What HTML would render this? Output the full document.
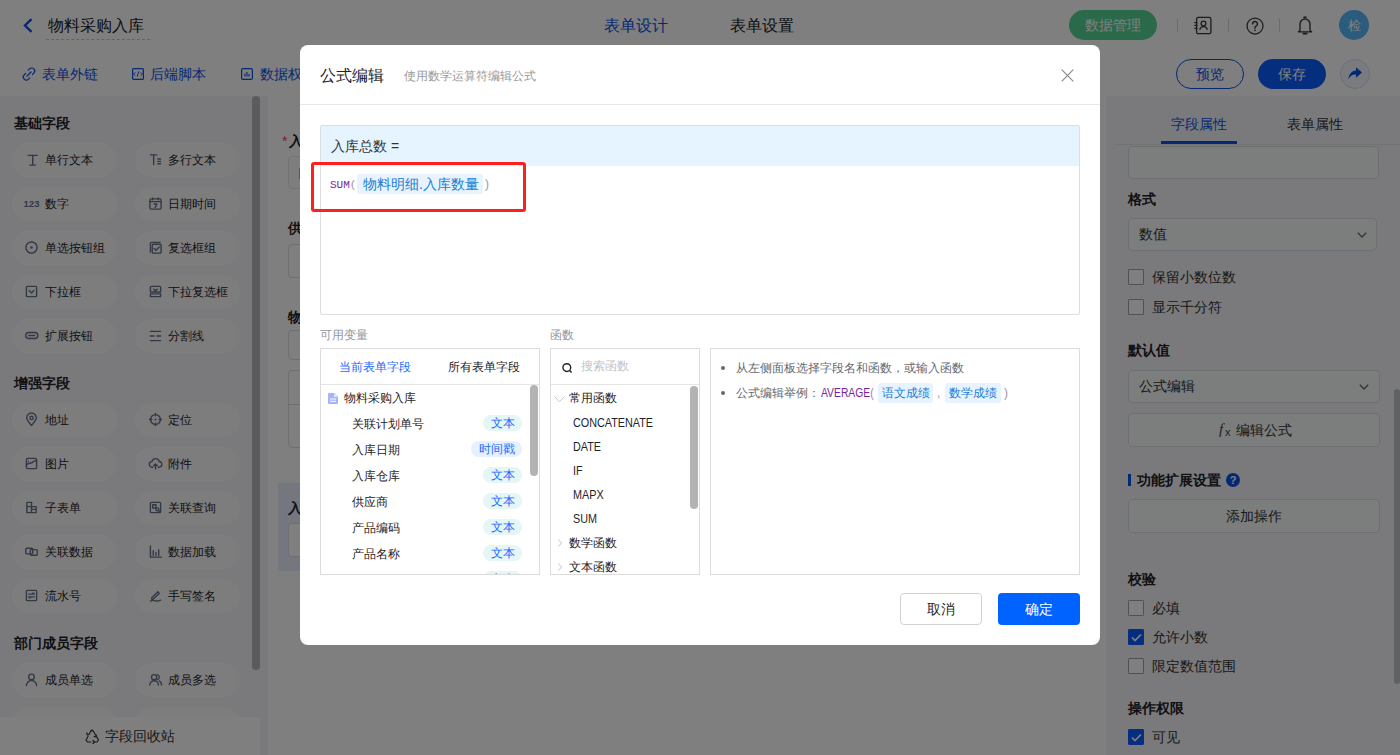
<!DOCTYPE html>
<html><head><meta charset="utf-8">
<style>
*{box-sizing:border-box;margin:0;padding:0}
html,body{width:1400px;height:755px;overflow:hidden;background:#fff;font-family:"Liberation Sans",sans-serif;color:#333}
.a{position:absolute}
.t{position:absolute;white-space:nowrap}
svg{position:absolute;overflow:visible}
/* header */
#hdr{left:0;top:0;width:1400px;height:51px;border-bottom:1px solid #e6e6e6;background:#fff}
#tb{left:0;top:50px;width:1400px;height:46px;background:#fff}
/* left panel */
#lp{left:0;top:96px;width:268px;height:659px;background:#f4f5f8}
.hd{font-size:14px;font-weight:bold;color:#1f2329;line-height:20px}
.pill{position:absolute;width:105px;height:34px;border-radius:17px;background:#fbfbfd}
.pill .t{left:33px;top:0;line-height:34px;font-size:12px;color:#1f2329}
.pill svg{left:13px;top:10px}
/* right panel */
#rp{left:1106px;top:96px;width:294px;height:659px;background:#f4f5f8}
.rl{font-size:14px;color:#333;line-height:20px}
.box{position:absolute;border:1px solid #dcdfe6;border-radius:4px;background:#f9fafb}
.cb{position:absolute;width:16px;height:16px;border:1px solid #9fa3a9;border-radius:1px;background:#fff}
.cbon{background:#0a5cff;border-color:#0a5cff}
.tag{position:absolute;height:16px;border-radius:8px;font-size:12px;line-height:16px;color:#1a6cff;text-align:center}
.fn{font-size:12px;line-height:20px;color:#1f2329;transform-origin:0 50%;transform:scaleX(.9)}
#mask{left:0;top:0;width:1400px;height:755px;background:rgba(0,0,0,.5)}
#modal{left:300px;top:45px;width:800px;height:600px;background:#fff;border-radius:8px}
</style></head><body>

<!-- ===== HEADER ===== -->
<div id="hdr" class="a">
  <svg style="left:23px;top:18px" width="10" height="15" viewBox="0 0 10 15"><path d="M8.5 1.2 L2 7.5 L8.5 13.8" fill="none" stroke="#0a50e6" stroke-width="2.4"/></svg>
  <div class="t" style="left:48px;top:15px;font-size:16px;line-height:22px;color:#222">物料采购入库</div>
  <div class="a" style="left:46px;top:39px;width:104px;border-top:1px dashed #c8c8c8"></div>
  <div class="t" style="left:604px;top:15px;font-size:16px;line-height:22px;color:#0a50e6">表单设计</div>
  <div class="t" style="left:730px;top:15px;font-size:16px;line-height:22px;color:#222">表单设置</div>
  <div class="a" style="left:1069px;top:10px;width:88px;height:30px;border-radius:15px;background:#55d494"></div>
  <div class="t" style="left:1069px;top:10px;width:88px;text-align:center;line-height:30px;font-size:14px;color:#fff">数据管理</div>
  <div class="a" style="left:1177px;top:18px;width:1px;height:14px;background:#d9d9d9"></div>
  <div class="a" style="left:1228px;top:18px;width:1px;height:14px;background:#d9d9d9"></div>
  <div class="a" style="left:1279px;top:18px;width:1px;height:14px;background:#d9d9d9"></div>

  <svg style="left:1193px;top:16px" width="19" height="19" viewBox="0 0 19 19"><rect x="3.6" y="1.4" width="14.3" height="16.3" rx="1.5" fill="none" stroke="#383838" stroke-width="1.3"/><path d="M1.3 6.6h3.2M1.3 9.4h3.2M1.3 12.3h3.2" stroke="#383838" stroke-width="1.3"/><circle cx="10.5" cy="7.5" r="2.4" fill="none" stroke="#383838" stroke-width="1.25"/><path d="M6.8 13.8a3.8 3.8 0 0 1 7.5 0" fill="none" stroke="#383838" stroke-width="1.25"/></svg>
  <svg style="left:1246px;top:17px" width="18" height="18" viewBox="0 0 18 18"><circle cx="9" cy="9" r="8" fill="none" stroke="#3a3a3a" stroke-width="1.25"/><path d="M6.6 6.9a2.4 2.4 0 1 1 3.4 2.2c-.7.3-1 .8-1 1.5v.6" fill="none" stroke="#3a3a3a" stroke-width="1.4" stroke-linecap="round"/><circle cx="9" cy="13.3" r=".9" fill="#3a3a3a"/></svg>
  <svg style="left:1297px;top:16px" width="16" height="19" viewBox="0 0 16 19"><path d="M7 1.3h2" stroke="#333" stroke-width="1.6" stroke-linecap="round"/><path d="M3 14.6V8a5 5 0 0 1 10 0v6.6l1.6 1.2H1.4z" fill="none" stroke="#383838" stroke-width="1.35" stroke-linejoin="round"/><path d="M6.3 17.6h3.4" stroke="#333" stroke-width="1.6" stroke-linecap="round"/></svg>
  <div class="a" style="left:1339px;top:10px;width:30px;height:30px;border-radius:15px;background:#56b8fa"></div>
  <div class="t" style="left:1339px;top:11px;width:30px;text-align:center;line-height:30px;font-size:13px;color:#fff">检</div>
</div>

<!-- ===== TOOLBAR ===== -->
<div id="tb" class="a">
  
  <svg style="left:22px;top:17px" width="14" height="14" viewBox="0 0 14 14"><path d="M6.2 3.2l1.3-1.3a3 3 0 0 1 4.3 4.3l-1.3 1.3M7.8 10.8l-1.3 1.3a3 3 0 0 1-4.3-4.3l1.3-1.3M5 9l4-4" fill="none" stroke="#0a50e6" stroke-width="1.2" stroke-linecap="round"/></svg>
  <svg style="left:132px;top:18px" width="12" height="12" viewBox="0 0 12 12"><rect x="0.6" y="0.6" width="10.8" height="10.8" rx="1" fill="none" stroke="#0a50e6" stroke-width="1.2"/><path d="M3.3 4.3L1.6 6l1.7 1.7M8.7 4.3L10.4 6 8.7 7.7M6.8 3.5L5.2 8.5" fill="none" stroke="#0a50e6" stroke-width="1"/></svg>
  <svg style="left:241px;top:18px" width="12" height="12" viewBox="0 0 12 12"><rect x="0.6" y="0.6" width="10.8" height="10.8" rx="1.5" fill="none" stroke="#0a50e6" stroke-width="1.2"/><path d="M4 5.5v3M6 4v4.5M8 6v2.5" stroke="#0a50e6" stroke-width="1.1"/></svg>
  <div class="t" style="left:42px;top:14px;font-size:14px;line-height:20px;color:#0a50e6">表单外链</div>
  <div class="t" style="left:150px;top:14px;font-size:14px;line-height:20px;color:#0a50e6">后端脚本</div>
  <div class="t" style="left:260px;top:14px;font-size:14px;line-height:20px;color:#0a50e6">数据权限</div>
  <div class="a" style="left:1176px;top:9px;width:68px;height:30px;border:1px solid #0a50e6;border-radius:15px"></div>
  <div class="t" style="left:1176px;top:9px;width:68px;text-align:center;line-height:30px;font-size:14px;color:#0a50e6">预览</div>
  <div class="a" style="left:1258px;top:9px;width:68px;height:30px;background:#0a5cff;border-radius:15px"></div>
  <div class="t" style="left:1258px;top:9px;width:68px;text-align:center;line-height:30px;font-size:14px;color:#fff">保存</div>
  <div class="a" style="left:1340px;top:9px;width:30px;height:30px;border:1px solid #d6e0f5;border-radius:15px;background:#f2f6ff"></div>
  <svg style="left:1348px;top:17px" width="14" height="13" viewBox="0 0 14 13"><path d="M8 0.3L14 5.5 8 10.8V7.6C4.5 7.4 2 8.8 0.3 12.5 0.7 7.4 3.5 3.9 8 3.5z" fill="#0a50e6"/></svg>

</div>

<!-- ===== LEFT PANEL ===== -->
<div id="lp" class="a">
<div class="t hd" style="left:14px;top:17px">基础字段</div>
<div class="pill" style="left:12px;top:47px"><svg style="left:13px;top:10px" width="13" height="13" viewBox="0 0 14 14"><path d="M3.3 2.5h10M8.3 2.5v10.5M5.3 13h6" fill="none" stroke="#67718a" stroke-width="1.5" stroke-linecap="round" stroke-linejoin="round"/></svg><div class="t">单行文本</div></div>
<div class="pill" style="left:135px;top:47px"><svg style="left:14px;top:10px" width="13" height="13" viewBox="0 0 14 14"><path d="M1.5 2h7M5 2v10.5M9.5 6.5h3M9.5 9h3M9.5 11.5h3" fill="none" stroke="#67718a" stroke-width="1.5" stroke-linecap="round" stroke-linejoin="round"/></svg><div class="t">多行文本</div></div>
<div class="pill" style="left:12px;top:91px"><svg style="left:13px;top:10px" width="13" height="13" viewBox="0 0 14 14"><text x="-1.5" y="10.8" font-family="Liberation Sans" font-weight="bold" font-size="10.2" fill="#67718a" letter-spacing="0">123</text></svg><div class="t">数字</div></div>
<div class="pill" style="left:135px;top:91px"><svg style="left:14px;top:10px" width="13" height="13" viewBox="0 0 14 14"><rect x="1" y="2" width="12" height="11" rx="1.5" fill="none" stroke="#67718a" stroke-width="1.5" stroke-linecap="round" stroke-linejoin="round"/><path d="M1 5h12M4 1v2M10 1v2M5.5 7.5h3l-2 4" fill="none" stroke="#67718a" stroke-width="1.5" stroke-linecap="round" stroke-linejoin="round"/></svg><div class="t">日期时间</div></div>
<div class="pill" style="left:12px;top:135px"><svg style="left:13px;top:10px" width="13" height="13" viewBox="0 0 14 14"><circle cx="7" cy="7" r="6" fill="none" stroke="#67718a" stroke-width="1.5" stroke-linecap="round" stroke-linejoin="round"/><circle cx="7" cy="7" r="1.3" fill="#67718a"/></svg><div class="t">单选按钮组</div></div>
<div class="pill" style="left:135px;top:135px"><svg style="left:14px;top:10px" width="13" height="13" viewBox="0 0 14 14"><path d="M1.5 12V2.5a1 1 0 0 1 1-1H12" fill="none" stroke="#67718a" stroke-width="1.5" stroke-linecap="round" stroke-linejoin="round"/><rect x="3.5" y="3.5" width="9.5" height="9.5" rx="1" fill="none" stroke="#67718a" stroke-width="1.5" stroke-linecap="round" stroke-linejoin="round"/><path d="M5.5 8l2 2 3.5-3.5" fill="none" stroke="#67718a" stroke-width="1.5" stroke-linecap="round" stroke-linejoin="round"/></svg><div class="t">复选框组</div></div>
<div class="pill" style="left:12px;top:179px"><svg style="left:13px;top:10px" width="13" height="13" viewBox="0 0 14 14"><rect x="1.5" y="1.5" width="11" height="11" rx="1" fill="none" stroke="#67718a" stroke-width="1.5" stroke-linecap="round" stroke-linejoin="round"/><path d="M4.5 6l2.5 2.5 2.5-2.5" fill="none" stroke="#67718a" stroke-width="1.5" stroke-linecap="round" stroke-linejoin="round"/></svg><div class="t">下拉框</div></div>
<div class="pill" style="left:135px;top:179px"><svg style="left:14px;top:10px" width="13" height="13" viewBox="0 0 14 14"><path d="M1.5 7.5v-5a1 1 0 0 1 1-1h9a1 1 0 0 1 1 1v5zM1.5 9.5h11v3h-11z M5 4.5l2 1.5 2-1.5" fill="none" stroke="#67718a" stroke-width="1.5" stroke-linecap="round" stroke-linejoin="round"/></svg><div class="t">下拉复选框</div></div>
<div class="pill" style="left:12px;top:223px"><svg style="left:13px;top:10px" width="13" height="13" viewBox="0 0 14 14"><rect x="0.8" y="3.8" width="13" height="6.5" rx="3.25" fill="none" stroke="#67718a" stroke-width="1.5" stroke-linecap="round" stroke-linejoin="round"/><path d="M4 7h6.5" fill="none" stroke="#67718a" stroke-width="1.5" stroke-linecap="round" stroke-linejoin="round"/></svg><div class="t">扩展按钮</div></div>
<div class="pill" style="left:135px;top:223px"><svg style="left:14px;top:10px" width="13" height="13" viewBox="0 0 14 14"><path d="M1.5 2.5h11M1.5 12.5h11M1.5 7.5h4M8.5 7.5h4" fill="none" stroke="#67718a" stroke-width="1.5" stroke-linecap="round" stroke-linejoin="round"/></svg><div class="t">分割线</div></div>
<div class="t hd" style="left:14px;top:277px">增强字段</div>
<div class="pill" style="left:12px;top:307px"><svg style="left:13px;top:10px" width="13" height="13" viewBox="0 0 14 14"><path d="M7 13.5C3.5 9.5 1.8 7.2 1.8 5.2a5.2 5.2 0 0 1 10.4 0c0 2-1.7 4.3-5.2 8.3z" fill="none" stroke="#67718a" stroke-width="1.5" stroke-linecap="round" stroke-linejoin="round"/><circle cx="7" cy="5.3" r="1.8" fill="none" stroke="#67718a" stroke-width="1.5" stroke-linecap="round" stroke-linejoin="round"/></svg><div class="t">地址</div></div>
<div class="pill" style="left:135px;top:307px"><svg style="left:14px;top:10px" width="13" height="13" viewBox="0 0 14 14"><circle cx="7" cy="7" r="5.3" fill="none" stroke="#67718a" stroke-width="1.5" stroke-linecap="round" stroke-linejoin="round"/><path d="M7 0.5v2.5M7 11v2.5M0.5 7h2.5M11 7h2.5" fill="none" stroke="#67718a" stroke-width="1.5" stroke-linecap="round" stroke-linejoin="round"/><circle cx="7" cy="7" r="1" fill="#67718a"/></svg><div class="t">定位</div></div>
<div class="pill" style="left:12px;top:351px"><svg style="left:13px;top:10px" width="13" height="13" viewBox="0 0 14 14"><rect x="1.5" y="1.5" width="11" height="11" rx="1.5" fill="none" stroke="#67718a" stroke-width="1.5" stroke-linecap="round" stroke-linejoin="round"/><path d="M1.5 8.5c2-3 4-1 6-2.5s3-2 5-2.5M3.5 4.5h.1" fill="none" stroke="#67718a" stroke-width="1.5" stroke-linecap="round" stroke-linejoin="round"/></svg><div class="t">图片</div></div>
<div class="pill" style="left:135px;top:351px"><svg style="left:14px;top:10px" width="13" height="13" viewBox="0 0 14 14"><path d="M4 11H3.5a3 3 0 0 1-.3-6A4 4 0 0 1 11 4.8 3 3 0 0 1 10.5 11H10M7 13V7.5M5 9.5l2-2 2 2" fill="none" stroke="#67718a" stroke-width="1.5" stroke-linecap="round" stroke-linejoin="round"/></svg><div class="t">附件</div></div>
<div class="pill" style="left:12px;top:395px"><svg style="left:13px;top:10px" width="13" height="13" viewBox="0 0 14 14"><path d="M2 1.5h5v11H2zM7 6h5v6.5H7M2 6h5M7 9h5" fill="none" stroke="#67718a" stroke-width="1.5" stroke-linecap="round" stroke-linejoin="round"/></svg><div class="t">子表单</div></div>
<div class="pill" style="left:135px;top:395px"><svg style="left:14px;top:10px" width="13" height="13" viewBox="0 0 14 14"><rect x="1.5" y="1.5" width="11" height="11" rx="1" fill="none" stroke="#67718a" stroke-width="1.5" stroke-linecap="round" stroke-linejoin="round"/><rect x="4" y="4" width="3.5" height="3.5" fill="none" stroke="#67718a" stroke-width="1.5" stroke-linecap="round" stroke-linejoin="round"/><circle cx="9" cy="9" r="1.6" fill="none" stroke="#67718a" stroke-width="1.5" stroke-linecap="round" stroke-linejoin="round"/><path d="M10.2 10.2l1.6 1.6" fill="none" stroke="#67718a" stroke-width="1.5" stroke-linecap="round" stroke-linejoin="round"/></svg><div class="t">关联查询</div></div>
<div class="pill" style="left:12px;top:439px"><svg style="left:13px;top:10px" width="13" height="13" viewBox="0 0 14 14"><rect x="0.8" y="3.5" width="7.5" height="6" rx="1" fill="none" stroke="#67718a" stroke-width="1.5" stroke-linecap="round" stroke-linejoin="round"/><rect x="5.7" y="5" width="7.5" height="6" rx="1" fill="none" stroke="#67718a" stroke-width="1.5" stroke-linecap="round" stroke-linejoin="round"/></svg><div class="t">关联数据</div></div>
<div class="pill" style="left:135px;top:439px"><svg style="left:14px;top:10px" width="13" height="13" viewBox="0 0 14 14"><path d="M1.5 1v12h12M4.5 6v5M7.5 8v3M10.5 5v6" fill="none" stroke="#67718a" stroke-width="1.5" stroke-linecap="round" stroke-linejoin="round"/></svg><div class="t">数据加载</div></div>
<div class="pill" style="left:12px;top:483px"><svg style="left:13px;top:10px" width="13" height="13" viewBox="0 0 14 14"><rect x="1.5" y="1.5" width="11" height="11" rx="1" fill="none" stroke="#67718a" stroke-width="1.5" stroke-linecap="round" stroke-linejoin="round"/><path d="M4 5.5h6l-1.5-1.2M10 8.5H4l1.5 1.2" fill="none" stroke="#67718a" stroke-width="1.5" stroke-linecap="round" stroke-linejoin="round"/></svg><div class="t">流水号</div></div>
<div class="pill" style="left:135px;top:483px"><svg style="left:14px;top:10px" width="13" height="13" viewBox="0 0 14 14"><path d="M3 9.5L9.5 3 11 4.5 4.5 11H3zM1.5 13c2.5-1.5 4.5-.5 6 0s3-.5 5-1" fill="none" stroke="#67718a" stroke-width="1.5" stroke-linecap="round" stroke-linejoin="round"/></svg><div class="t">手写签名</div></div>
<div class="t hd" style="left:14px;top:537px">部门成员字段</div>
<div class="pill" style="left:12px;top:567px"><svg style="left:13px;top:10px" width="13" height="13" viewBox="0 0 14 14"><circle cx="7" cy="4.2" r="3" fill="none" stroke="#67718a" stroke-width="1.5" stroke-linecap="round" stroke-linejoin="round"/><path d="M1.5 13.5a5.5 5.5 0 0 1 11 0" fill="none" stroke="#67718a" stroke-width="1.5" stroke-linecap="round" stroke-linejoin="round"/></svg><div class="t">成员单选</div></div>
<div class="pill" style="left:135px;top:567px"><svg style="left:14px;top:10px" width="13" height="13" viewBox="0 0 14 14"><circle cx="5.5" cy="4.5" r="2.8" fill="none" stroke="#67718a" stroke-width="1.5" stroke-linecap="round" stroke-linejoin="round"/><path d="M0.8 13a4.7 4.7 0 0 1 9.4 0M9 1.8a2.8 2.8 0 0 1 0 5.4M11 8.5a4.7 4.7 0 0 1 2.5 4.5" fill="none" stroke="#67718a" stroke-width="1.5" stroke-linecap="round" stroke-linejoin="round"/></svg><div class="t">成员多选</div></div>
<div class="pill" style="left:12px;top:611px"></div>
<div class="pill" style="left:135px;top:611px"></div>
<div class="a" style="left:252px;top:0;width:8px;height:574px;border-radius:4px;background:#b6b6b6"></div>
<div class="a" style="left:0;top:621px;width:260px;height:38px;background:#fff"><svg style="left:85px;top:12px" width="14" height="14" viewBox="0 0 14 14"><path d="M5.5 2.5L7 1l1.5 1.5 2 3.5M6 1.8L4 5.5M3 7.5l-2 3.5 1.5 2H6M9 13h3l1.5-2-2-3.5M8 11.5L9.5 13 8 14.5M4.2 5.3l-1.9.5-.5-1.9M11.5 6.2l-.6 1.8L9 7.5" fill="none" stroke="#333" stroke-width="1.2" stroke-linecap="round" stroke-linejoin="round"/></svg><div class="t" style="left:105px;top:0;line-height:38px;font-size:14px;color:#333">字段回收站</div></div>
</div>

<!-- ===== CANVAS ===== -->
<div id="cv" class="a" style="left:268px;top:96px;width:838px;height:659px;background:#fff">
<div class="t" style="left:14px;top:35px;font-size:14px;color:#e34d59;line-height:20px">*</div>
<div class="t hd" style="left:21px;top:35px">入库总数</div>
<div class="a" style="left:20px;top:60px;width:400px;height:33px;border:1px solid #e6e8ec;border-radius:4px;background:#fcfcfd"></div>
<div class="a" style="left:31px;top:72px;width:1px;height:11px;background:#e8a33d"></div>
<div class="t hd" style="left:20px;top:122px">供应商</div>
<div class="a" style="left:20px;top:148px;width:400px;height:34px;border:1px solid #dcdfe6;border-radius:4px"></div>
<div class="t hd" style="left:20px;top:211px">物料明细</div>
<div class="a" style="left:20px;top:234px;width:400px;height:30px;border:1px solid #dcdfe6;border-radius:4px"></div>
<div class="a" style="left:20px;top:274px;width:400px;height:78px;border:1px solid #dcdfe6;border-radius:4px"></div>
<div class="a" style="left:20px;top:308px;width:400px;height:1px;background:#dcdfe6"></div>
<div class="a" style="left:10px;top:387px;width:600px;height:88px;background:#e8eefc"></div>
<div class="t hd" style="left:20px;top:402px">入库总数</div>
<div class="a" style="left:20px;top:427px;width:400px;height:34px;border:1px solid #dcdfe6;border-radius:4px;background:#fff"></div>
</div>

<!-- ===== RIGHT PANEL ===== -->
<div id="rp" class="a">
<div class="t" style="left:65px;top:18px;font-size:14px;line-height:20px;color:#0a50e6">字段属性</div>
<div class="t" style="left:181px;top:18px;font-size:14px;line-height:20px;color:#333">表单属性</div>
<div class="a" style="left:8px;top:48px;width:286px;height:1px;background:#e4e6eb"></div>
<div class="a" style="left:55px;top:45px;width:76px;height:3px;background:#0a50e6"></div>
<div class="box" style="left:22px;top:50px;width:251px;height:33px"></div>
<div class="t hd" style="left:22px;top:93px">格式</div>
<div class="box" style="left:22px;top:122px;width:249px;height:33px"></div>
<div class="t" style="left:33px;top:128px;font-size:14px;line-height:20px;color:#333">数值</div>
<svg style="left:251px;top:136px" width="10" height="6" viewBox="0 0 10 6"><path d="M0.8 0.8L5 5 9.2 0.8" fill="none" stroke="#666" stroke-width="1.3"/></svg>
<div class="cb" style="left:22px;top:173px"></div>
<div class="t" style="left:46px;top:171px;font-size:14px;line-height:20px;color:#333">保留小数位数</div>
<div class="cb" style="left:22px;top:203px"></div>
<div class="t" style="left:46px;top:201px;font-size:14px;line-height:20px;color:#333">显示千分符</div>
<div class="t hd" style="left:22px;top:244px">默认值</div>
<div class="box" style="left:22px;top:274px;width:252px;height:33px"></div>
<div class="t" style="left:33px;top:280px;font-size:14px;line-height:20px;color:#333">公式编辑</div>
<svg style="left:253px;top:288px" width="10" height="6" viewBox="0 0 10 6"><path d="M0.8 0.8L5 5 9.2 0.8" fill="none" stroke="#666" stroke-width="1.3"/></svg>
<div class="box" style="left:22px;top:317px;width:252px;height:34px"></div>
<div class="t" style="left:113px;top:323px;font-size:15px;line-height:20px;color:#444;font-family:'Liberation Serif';font-style:italic">f</div><div class="t" style="left:119px;top:328px;font-size:11px;line-height:16px;color:#444;font-family:'Liberation Sans'">x</div>
<div class="t" style="left:130px;top:324px;font-size:14px;line-height:20px;color:#333">编辑公式</div>
<div class="a" style="left:22px;top:378px;width:3px;height:12px;background:#0a50e6"></div>
<div class="t hd" style="left:31px;top:374px">功能扩展设置</div>
<div class="a" style="left:120px;top:377px;width:14px;height:14px;border-radius:7px;background:#0a50e6;color:#fff;font-size:11px;font-weight:bold;line-height:14px;text-align:center">?</div>
<div class="box" style="left:22px;top:403px;width:252px;height:34px"></div>
<div class="t" style="left:22px;top:410px;width:252px;text-align:center;font-size:14px;line-height:20px;color:#333">添加操作</div>
<div class="t hd" style="left:22px;top:473px">校验</div>
<div class="cb" style="left:22px;top:504px"></div>
<div class="t" style="left:46px;top:502px;font-size:14px;line-height:20px;color:#333">必填</div>
<div class="cb cbon" style="left:22px;top:533px"><svg style="left:2px;top:3px" width="11" height="9" viewBox="0 0 11 9"><path d="M1 4.5l3 3 6-6" fill="none" stroke="#fff" stroke-width="1.7"/></svg></div>
<div class="t" style="left:46px;top:531px;font-size:14px;line-height:20px;color:#333">允许小数</div>
<div class="cb" style="left:22px;top:562px"></div>
<div class="t" style="left:46px;top:560px;font-size:14px;line-height:20px;color:#333">限定数值范围</div>
<div class="t hd" style="left:22px;top:602px">操作权限</div>
<div class="cb cbon" style="left:22px;top:633px"><svg style="left:2px;top:3px" width="11" height="9" viewBox="0 0 11 9"><path d="M1 4.5l3 3 6-6" fill="none" stroke="#fff" stroke-width="1.7"/></svg></div>
<div class="t" style="left:46px;top:631px;font-size:14px;line-height:20px;color:#333">可见</div>
<div class="a" style="left:288px;top:293px;width:6px;height:295px;border-radius:3px;background:#c1c2c5"></div>
</div>

<div id="mask" class="a"></div>

<!-- ===== MODAL ===== -->
<div id="modal" class="a">
<div class="t" style="left:20px;top:20px;font-size:16px;line-height:22px;color:#1f2329">公式编辑</div>
<div class="t" style="left:104px;top:23px;font-size:12px;line-height:16px;color:#999">使用数学运算符编辑公式</div>
<svg style="left:761px;top:24px" width="13" height="13" viewBox="0 0 13 13"><path d="M0.7 0.7L12.3 12.3M12.3 0.7L0.7 12.3" stroke="#8a8a8a" stroke-width="1.2"/></svg>
<div class="a" style="left:0;top:59px;width:800px;height:1px;background:#e8e8e8"></div>

<div class="a" style="left:20px;top:80px;width:760px;height:190px;border:1px solid #dedede;border-radius:2px;overflow:hidden">
  <div class="a" style="left:0;top:0;width:758px;height:40px;background:#e6f4ff"></div>
  <div class="t" style="left:10px;top:10px;font-size:14px;line-height:20px;color:#333">入库总数 =</div>
  <div class="t" style="left:9px;top:51px;font-family:'Liberation Mono',monospace;font-size:11px;line-height:16px;color:#7b1fa2">SUM<span style="color:#999">(</span></div>
  <div class="a" style="left:36px;top:48px;width:126px;height:20px;border-radius:3px;background:#e8f3ff"></div>
  <div class="t" style="left:42px;top:48px;font-size:14px;line-height:20px;color:#1a7fd4">物料明细.入库数量</div>
  <div class="t" style="left:164px;top:50px;font-size:12px;line-height:16px;color:#999">)</div>
</div>
<div class="a" style="left:11px;top:117px;width:215px;height:50px;border:3px solid #ff1f1f;border-radius:3px"></div>

<div class="t" style="left:20px;top:282px;font-size:12px;line-height:16px;color:#8f959e">可用变量</div>
<div class="t" style="left:250px;top:282px;font-size:12px;line-height:16px;color:#8f959e">函数</div>

<div class="a" style="left:20px;top:303px;width:220px;height:227px;border:1px solid #dcdcdc;overflow:hidden">
  <div class="t" style="left:18px;top:10px;font-size:12px;line-height:16px;color:#1a6cff">当前表单字段</div>
  <div class="t" style="left:127px;top:10px;font-size:12px;line-height:16px;color:#1f2329">所有表单字段</div>
  <div class="a" style="left:0;top:35px;width:218px;height:1px;background:#e4e4e4"></div>
  <svg style="left:7px;top:44px" width="10" height="11" viewBox="0 0 10 11"><path d="M0 1a1 1 0 0 1 1-1h5.5L10 3.5V10a1 1 0 0 1-1 1H1a1 1 0 0 1-1-1z" fill="#a4b4ff"/><path d="M2 6h6M2 8.3h6" stroke="#fff" stroke-width="1"/><path d="M6 0v4h4" fill="#dfe6ff"/></svg>
  <div class="t" style="left:23px;top:39px;font-size:12px;line-height:20px;color:#1f2329">物料采购入库</div>
<div class="t" style="left:31px;top:65px;font-size:12px;line-height:20px;color:#1f2329">关联计划单号</div><div class="tag" style="left:162px;top:66px;width:39px;background:#e4f6f6">文本</div>
<div class="t" style="left:31px;top:91px;font-size:12px;line-height:20px;color:#1f2329">入库日期</div><div class="tag" style="left:150px;top:92px;width:51px;background:#e7f0ff">时间戳</div>
<div class="t" style="left:31px;top:117px;font-size:12px;line-height:20px;color:#1f2329">入库仓库</div><div class="tag" style="left:162px;top:118px;width:39px;background:#e4f6f6">文本</div>
<div class="t" style="left:31px;top:143px;font-size:12px;line-height:20px;color:#1f2329">供应商</div><div class="tag" style="left:162px;top:144px;width:39px;background:#e4f6f6">文本</div>
<div class="t" style="left:31px;top:169px;font-size:12px;line-height:20px;color:#1f2329">产品编码</div><div class="tag" style="left:162px;top:170px;width:39px;background:#e4f6f6">文本</div>
<div class="t" style="left:31px;top:195px;font-size:12px;line-height:20px;color:#1f2329">产品名称</div><div class="tag" style="left:162px;top:196px;width:39px;background:#e4f6f6">文本</div>
<div class="t" style="left:31px;top:221px;font-size:12px;line-height:20px;color:#1f2329">产品规格</div><div class="tag" style="left:162px;top:222px;width:39px;background:#e4f6f6">文本</div>

  <div class="a" style="left:209px;top:36px;width:8px;height:91px;border-radius:4px;background:#b3b3b3"></div>
</div>

<div class="a" style="left:250px;top:303px;width:150px;height:227px;border:1px solid #dcdcdc;overflow:hidden">
  <svg style="left:11px;top:14px" width="11" height="10" viewBox="0 0 11 10"><circle cx="4.8" cy="4.6" r="3.9" fill="none" stroke="#222" stroke-width="1.4"/><path d="M7.5 7.4L9.6 9.5" stroke="#222" stroke-width="1.4"/></svg>
  <div class="t" style="left:30px;top:9px;font-size:12px;line-height:16px;color:#c0c4cc">搜索函数</div>
  <div class="a" style="left:0;top:35px;width:148px;height:1px;background:#e4e4e4"></div>
  <svg style="left:3px;top:47px" width="11" height="7" viewBox="0 0 11 7"><path d="M0.5 0.5L5.5 5.8 10.5 0.5" fill="none" stroke="#c0c4cc" stroke-width="1"/></svg>
  <div class="t" style="left:18px;top:39px;font-size:12px;line-height:20px;color:#1f2329">常用函数</div>
<div class="t fn" style="left:22px;top:64px">CONCATENATE</div>
<div class="t fn" style="left:22px;top:88px">DATE</div>
<div class="t fn" style="left:22px;top:112px">IF</div>
<div class="t fn" style="left:22px;top:136px">MAPX</div>
<div class="t fn" style="left:22px;top:160px">SUM</div>

  <svg style="left:7px;top:190px" width="4" height="8" viewBox="0 0 4 8"><path d="M0.5 0.5L3.5 4 0.5 7.5" fill="none" stroke="#c0c4cc" stroke-width="1"/></svg>
  <div class="t" style="left:18px;top:184px;font-size:12px;line-height:20px;color:#1f2329">数学函数</div>
  <svg style="left:7px;top:214px" width="4" height="8" viewBox="0 0 4 8"><path d="M0.5 0.5L3.5 4 0.5 7.5" fill="none" stroke="#c0c4cc" stroke-width="1"/></svg>
  <div class="t" style="left:18px;top:208px;font-size:12px;line-height:20px;color:#1f2329">文本函数</div>
  <div class="a" style="left:139px;top:37px;width:8px;height:123px;border-radius:4px;background:#b3b3b3"></div>
</div>

<div class="a" style="left:410px;top:303px;width:370px;height:227px;border:1px solid #dcdcdc">
  <div class="a" style="left:10px;top:17px;width:4px;height:4px;border-radius:2px;background:#646a73"></div>
  <div class="t" style="left:25px;top:9px;font-size:12px;line-height:20px;color:#646a73">从左侧面板选择字段名和函数，或输入函数</div>
  <div class="a" style="left:10px;top:42px;width:4px;height:4px;border-radius:2px;background:#646a73"></div>
  <div class="t" style="left:25px;top:34px;font-size:12px;line-height:20px;color:#646a73">公式编辑举例：</div>
  <div class="t" style="left:110px;top:34px;font-size:12px;line-height:20px;color:#7b1fa2;transform-origin:0 50%;transform:scaleX(.86)">AVERAGE<span style="color:#a07bb0">(</span></div>
  <div class="a" style="left:167px;top:34px;width:55px;height:20px;border-radius:3px;background:#e8f3ff"></div>
  <div class="t" style="left:171px;top:34px;font-size:12px;line-height:20px;color:#1a7fd4">语文成绩</div>
  <div class="t" style="left:226px;top:34px;font-size:12px;line-height:20px;color:#999">,</div>
  <div class="a" style="left:234px;top:34px;width:56px;height:20px;border-radius:3px;background:#e8f3ff"></div>
  <div class="t" style="left:238px;top:34px;font-size:12px;line-height:20px;color:#1a7fd4">数学成绩</div>
  <div class="t" style="left:293px;top:34px;font-size:12px;line-height:20px;color:#999">)</div>
</div>

<div class="a" style="left:600px;top:548px;width:82px;height:32px;border:1px solid #d0d3d6;border-radius:4px;background:#fff"></div>
<div class="t" style="left:600px;top:548px;width:82px;text-align:center;font-size:14px;line-height:32px;color:#1f2329">取消</div>
<div class="a" style="left:698px;top:548px;width:82px;height:32px;border-radius:4px;background:#0062ff"></div>
<div class="t" style="left:698px;top:548px;width:82px;text-align:center;font-size:14px;line-height:32px;color:#fff;font-weight:500">确定</div>
</div>

</body></html>
